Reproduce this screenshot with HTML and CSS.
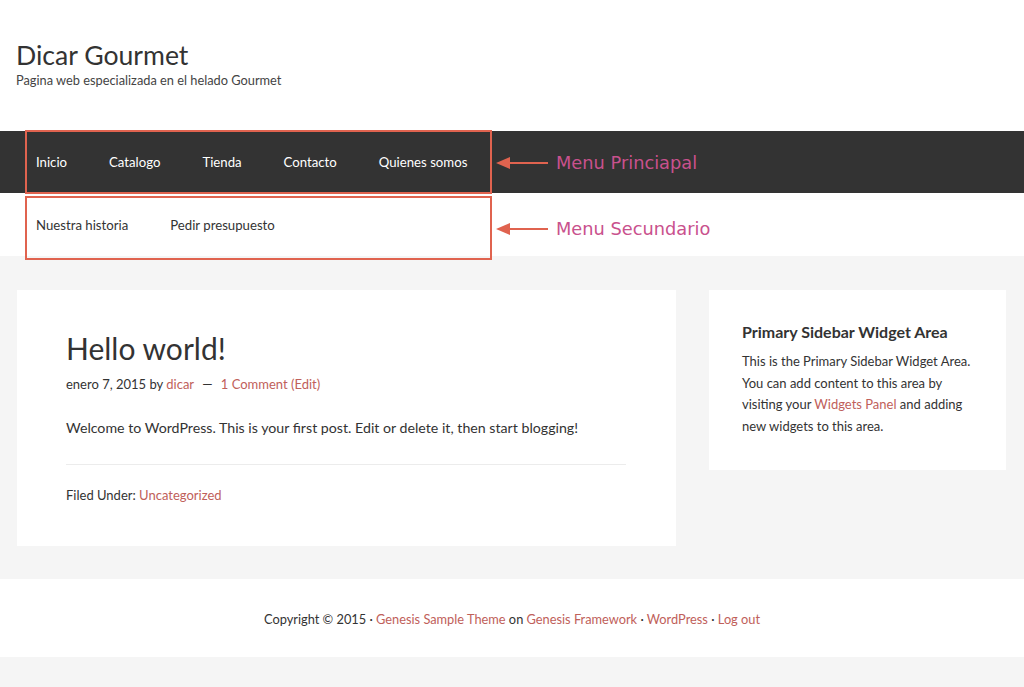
FILE: index.html
```html
<!DOCTYPE html>
<html lang="es">
<head>
<meta charset="utf-8">
<title>Dicar Gourmet</title>
<link rel="stylesheet" href="styles.css">
</head>
<body>
<div class="site">
  <header class="site-header">
    <h1 class="site-title">Dicar Gourmet</h1>
    <p class="site-description">Pagina web especializada en el helado Gourmet</p>
  </header>

  <div class="menus">
    <nav class="nav nav-primary">
      <ul class="menu">
        <li><a href="#">Inicio</a></li>
        <li><a href="#">Catalogo</a></li>
        <li><a href="#">Tienda</a></li>
        <li><a href="#">Contacto</a></li>
        <li><a href="#">Quienes somos</a></li>
      </ul>
    </nav>
    <nav class="nav nav-secondary">
      <ul class="menu">
        <li><a href="#">Nuestra historia</a></li>
        <li><a href="#">Pedir presupuesto</a></li>
      </ul>
    </nav>

    <!-- callouts labelling the two menus -->
    <div class="callout callout-primary">
      <span class="callout-arrow"></span>
      <span class="callout-label">Menu Princiapal</span>
    </div>
    <div class="callout callout-secondary">
      <span class="callout-arrow"></span>
      <span class="callout-label">Menu Secundario</span>
    </div>
  </div>

  <div class="site-inner">
    <main class="content">
      <article class="entry">
        <h2 class="entry-title">Hello world!</h2>
        <p class="entry-meta">enero 7, 2015 by <a href="#">dicar</a> <span class="dash">—</span> <a href="#">1 Comment</a> <a href="#">(Edit)</a></p>
        <div class="entry-content">
          <p>Welcome to WordPress. This is your first post. Edit or delete it, then start blogging!</p>
        </div>
        <footer class="entry-footer">
          <p class="entry-meta">Filed Under: <a href="#">Uncategorized</a></p>
        </footer>
      </article>
    </main>
    <aside class="sidebar">
      <section class="widget">
        <h4 class="widget-title">Primary Sidebar Widget Area</h4>
        <p>This is the Primary Sidebar Widget Area. You can add content to this area by visiting your <a href="#">Widgets Panel</a> and adding new widgets to this area.</p>
      </section>
    </aside>
  </div>

  <footer class="site-footer">
    <p>Copyright © 2015 · <a href="#">Genesis Sample Theme</a> on <a href="#">Genesis Framework</a> · <a href="#">WordPress</a> · <a href="#">Log out</a></p>
  </footer>
</div>
</body>
</html>
```

FILE: styles.css
```css
* {
  box-sizing: border-box;
}

html, body {
  margin: 0;
  padding: 0;
}

body {
  background: #f5f5f5;
  color: #333;
  font-family: Lato, "Open Sans", sans-serif;
  font-size: 13px;
  line-height: 1.6;
}

a {
  color: #c0605a;
  text-decoration: none;
}

p {
  margin: 0;
}

/* Header */
.site-header {
  background: #fff;
  height: 131px;
  padding: 38px 16px 0;
}

.site-title {
  margin: 0;
  font-size: 26.6px;
  font-weight: 400;
  line-height: 34px;
  color: #333;
}

.site-description {
  font-size: 12.8px;
  line-height: 16px;
  color: #444;
}

/* Menus */
.menus {
  position: relative;
}

.nav {
  padding-left: 15px;
}

.menu {
  list-style: none;
  margin: 0;
  padding: 0;
  display: flex;
}

.menu a {
  display: block;
  padding: 0 21px;
  font-size: 13.2px;
}

.nav-primary {
  background: #333;
  height: 62px;
}

.nav-primary .menu a {
  color: #fff;
  line-height: 62px;
}

.nav-secondary {
  background: #fff;
  height: 63px;
}

.nav-secondary .menu a {
  color: #333;
  line-height: 64px;
}

/* Annotation boxes around each menu, with arrow and label */
.callout {
  position: absolute;
  left: 25px;
  width: 467px;
  border: 2px solid #e0634f;
  pointer-events: none;
}

.callout-primary {
  top: -1px;
  height: 64px;
}

.callout-secondary {
  top: 65px;
  height: 64px;
}

.callout-arrow {
  position: absolute;
  left: 469px;
  top: 25px;
  width: 52px;
  height: 12px;
}

.callout-arrow::before {
  content: "";
  position: absolute;
  left: 0;
  top: 0;
  border-right: 14px solid #e0634f;
  border-top: 6px solid transparent;
  border-bottom: 6px solid transparent;
}

.callout-arrow::after {
  content: "";
  position: absolute;
  left: 10px;
  right: 0;
  top: 5px;
  height: 2px;
  background: #e0634f;
}

.callout-label {
  position: absolute;
  left: 529px;
  top: 19px;
  white-space: nowrap;
  font-family: "DejaVu Sans", Verdana, sans-serif;
  font-size: 17.8px;
  line-height: 24px;
  color: #c9518d;
}

/* Content area */
.site-inner {
  display: flex;
  gap: 33px;
  padding: 34px 18px 33px 17px;
  align-items: flex-start;
}

.content {
  width: 659px;
  background: #fff;
}

.entry {
  padding: 40px 50px 41px 49px;
}

.entry-title {
  margin: 0 0 8px;
  font-size: 30px;
  font-weight: 400;
  line-height: 36px;
  color: #333;
}

.entry-meta {
  font-size: 13px;
  line-height: 20px;
}

.entry-meta .dash {
  margin: 0 5px;
}

.entry-content {
  margin-top: 23px;
  padding-bottom: 25px;
  border-bottom: 1px solid #ececec;
}

.entry-content p {
  font-size: 14.2px;
  line-height: 22px;
}

.entry-footer {
  padding-top: 20px;
}

.sidebar {
  width: 297px;
  background: #fff;
}

.widget {
  padding: 31px 33px 33px;
}

.widget-title {
  margin: 0 0 8px;
  font-size: 16px;
  font-weight: 700;
  line-height: 22px;
  color: #333;
}

.widget p {
  font-size: 13px;
  line-height: 21.5px;
  color: #333;
}

/* Footer */
.site-footer {
  background: #fff;
  height: 78px;
  text-align: center;
  padding-top: 30px;
}

.site-footer p {
  font-size: 12.8px;
  line-height: 20px;
}
```
